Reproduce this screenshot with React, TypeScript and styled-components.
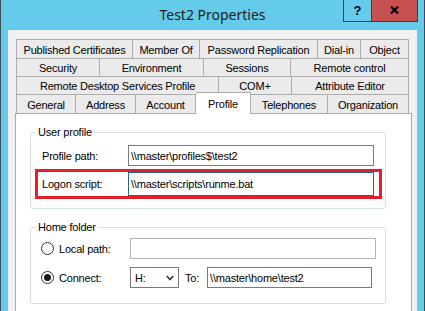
import React from 'react';
import styled, { createGlobalStyle } from 'styled-components';

const GlobalStyle = createGlobalStyle`
	html, body {
		margin: 0;
		padding: 0;
		width: 425px;
		height: 311px;
		overflow: hidden;
		background: #64CBEA;
	}
	* {
		box-sizing: border-box;
	}
`

const StyledWindow = styled.div`
	width: 425px;
	height: 311px;
	display: flex;
	flex-direction: column;
	background: #64CBEA;
	border-left: 1px solid #3d4a50;
	border-right: 1px solid #3d4a50;
	overflow: hidden;
	font-family: "Liberation Sans", Arial, sans-serif;
	font-size: 11px;
	letter-spacing: -0.2px;
	color: #000;
`

const StyledTitleBar = styled.div`
	height: 30px;
	flex: none;
	display: grid;
	grid-template-columns: 1fr auto 1fr;
	align-items: start;
`

const StyledTitle = styled.div`
	grid-column: 2;
	padding-top: 5px;
	font-family: "Noto Sans", sans-serif;
	font-size: 14px;
	letter-spacing: 0;
	line-height: 20px;
	color: #1e1e1e;
`

const StyledCaptionButtons = styled.div`
	grid-column: 3;
	justify-self: end;
	display: flex;
	margin-right: 6px;
	margin-top: -1px;
`

const StyledCaptionButton = styled.div<{ $w: number; $bg: string }>`
	width: ${p => p.$w}px;
	height: 23px;
	background: ${p => p.$bg};
	border: 1px solid #3c3c3c;
	border-top: none;
	display: flex;
	align-items: center;
	justify-content: center;
	font-weight: bold;
	font-size: 13px;
	letter-spacing: 0;
	& + & {
		border-left: none;
	}
`

const StyledClient = styled.div`
	flex: 1;
	margin: 0 7px;
	background: #F0F0F0;
	padding: 9px 5px 0 7px;
	display: flex;
	flex-direction: column;
`

const StyledTabRow = styled.div<{ $h: number }>`
	display: flex;
	align-items: flex-end;
	height: ${p => p.$h}px;
	margin: 0 3px 0 1px;
`

const StyledTab = styled.div<{ $w: number; $active?: boolean }>`
	width: ${p => p.$w}px;
	height: ${p => (p.$active ? 'calc(100% + 3px)' : '100%')};
	margin-bottom: ${p => (p.$active ? '-1px' : '0')};
	position: ${p => (p.$active ? 'relative' : 'static')};
	z-index: ${p => (p.$active ? 1 : 0)};
	background: ${p => (p.$active ? '#FFFFFF' : '#EBEBEB')};
	border: 1px solid #ACACAC;
	border-bottom: none;
	display: flex;
	align-items: center;
	justify-content: center;
	padding-top: 1px;
	white-space: nowrap;
	& + & {
		border-left: none;
	}
`

const StyledPanel = styled.div`
	flex: 1;
	background: #FFFFFF;
	border: 1px solid #ACACAC;
	border-bottom: none;
	padding: 18px 25px 0 14px;
	display: flex;
	flex-direction: column;
`

const StyledGroup = styled.div<{ $top: number; $pad: string }>`
	position: relative;
	margin-top: ${p => p.$top}px;
	width: 356px;
	border: 1px solid #D5DFE5;
	border-radius: 3px;
	padding: ${p => p.$pad};
	display: flex;
	flex-direction: column;
`

const StyledGroupTitle = styled.div`
	position: absolute;
	top: -8px;
	left: 5px;
	padding: 0 2px;
	background: #FFFFFF;
	line-height: 14px;
`

const StyledFieldRow = styled.div<{ $gap?: number }>`
	display: flex;
	align-items: center;
	padding-left: 11px;
	margin-top: ${p => p.$gap ?? 0}px;
`

const StyledHighlight = styled.div`
	display: flex;
	align-items: center;
	margin: 3px 3px 0 4px;
	border: 3px solid #E3202A;
	padding: 0 5px 0 4px;
`

const StyledLabel = styled.span<{ $w: number }>`
	width: ${p => p.$w}px;
	flex: none;
	white-space: nowrap;
`

const StyledTextBox = styled.input<{ $w: number; $h?: number; $tone?: 'dark' | 'light' | 'focus' }>`
	width: ${p => p.$w}px;
	height: ${p => p.$h ?? 21}px;
	flex: none;
	margin: 0;
	padding: 0 2px;
	border: 1px solid ${p => (p.$tone === 'light' ? '#B5B5B5' : p.$tone === 'focus' ? '#2C6397' : '#7A7A7A')};
	background: #FFFFFF;
	font-family: "Liberation Sans", Arial, sans-serif;
	font-size: 11px;
	letter-spacing: -0.2px;
	color: #000;
	outline: none;
`

const StyledRadio = styled.span<{ $checked?: boolean }>`
	width: 13px;
	height: 13px;
	flex: none;
	border-radius: 50%;
	border: 1px solid #333333;
	background: #FFFFFF;
	margin-right: 5px;
	display: flex;
	align-items: center;
	justify-content: center;
	&::after {
		content: '';
		display: ${p => (p.$checked ? 'block' : 'none')};
		width: 7px;
		height: 7px;
		border-radius: 50%;
		background: #1A1A1A;
	}
`

const StyledSelect = styled.div`
	width: 49px;
	height: 21px;
	flex: none;
	border: 1px solid #7A7A7A;
	display: flex;
	align-items: center;
	justify-content: space-between;
	padding: 0 4px 0 4px;
`

const StyledToLabel = styled.span`
	margin: 0 8px 0 6px;
`

const tabRows: { h: number; tabs: [string, number][] }[] = [
	{ h: 19, tabs: [['Published Certificates', 117], ['Member Of', 67], ['Password Replication', 118], ['Dial-in', 43], ['Object', 48]] },
	{ h: 18, tabs: [['Security', 84], ['Environment', 104], ['Sessions', 87], ['Remote control', 118]] },
	{ h: 18, tabs: [['Remote Desktop Services Profile', 203], ['COM+', 73], ['Attribute Editor', 117]] },
	{ h: 19, tabs: [['General', 60], ['Address', 60], ['Account', 60], ['Profile', 55], ['Telephones', 77], ['Organization', 81]] },
]

const App = () => {
	return <>
		<GlobalStyle />
		<StyledWindow>
			<StyledTitleBar>
				<StyledTitle>Test2 Properties</StyledTitle>
				<StyledCaptionButtons>
					<StyledCaptionButton $w={29} $bg="#64CBEA">?</StyledCaptionButton>
					<StyledCaptionButton $w={46} $bg="#C75050">
						<svg width="9" height="8" viewBox="0 0 9 8">
							<path d="M1 0.5 L8 7.5 M8 0.5 L1 7.5" stroke="#000" strokeWidth="2.2" />
						</svg>
					</StyledCaptionButton>
				</StyledCaptionButtons>
			</StyledTitleBar>
			<StyledClient>
				{tabRows.map((row, i) => (
					<StyledTabRow key={i} $h={row.h}>
						{row.tabs.map(([name, w]) => (
							<StyledTab key={name} $w={w} $active={name === 'Profile'}>{name}</StyledTab>
						))}
					</StyledTabRow>
				))}
				<StyledPanel>
					<StyledGroup $top={0} $pad="12px 0 9px 0">
						<StyledGroupTitle>User profile</StyledGroupTitle>
						<StyledFieldRow>
							<StyledLabel $w={86}>Profile path:</StyledLabel>
							<StyledTextBox $w={246} $tone="dark" readOnly value={'\\\\master\\profiles$\\test2'} />
						</StyledFieldRow>
						<StyledHighlight>
							<StyledLabel $w={86}>Logon script:</StyledLabel>
							<StyledTextBox $w={246} $h={24} $tone="focus" readOnly value={'\\\\master\\scripts\\runme.bat'} />
						</StyledHighlight>
					</StyledGroup>
					<StyledGroup $top={18} $pad="10px 0 15px 0">
						<StyledGroupTitle>Home folder</StyledGroupTitle>
						<StyledFieldRow style={{ paddingLeft: 10 }}>
							<StyledRadio />
							<StyledLabel $w={71}>Local path:</StyledLabel>
							<StyledTextBox $w={246} $tone="light" readOnly value="" />
						</StyledFieldRow>
						<StyledFieldRow $gap={8} style={{ paddingLeft: 10 }}>
							<StyledRadio $checked />
							<StyledLabel $w={71}>Connect:</StyledLabel>
							<StyledSelect>
								<span>H:</span>
								<svg width="8" height="6" viewBox="0 0 8 6">
									<path d="M0.8 1 L4 4.5 L7.2 1" stroke="#333" strokeWidth="1.6" fill="none" />
								</svg>
							</StyledSelect>
							<StyledToLabel>To:</StyledToLabel>
							<StyledTextBox $w={165} $tone="dark" readOnly value={'\\\\master\\home\\test2'} />
						</StyledFieldRow>
					</StyledGroup>
				</StyledPanel>
			</StyledClient>
		</StyledWindow>
	</>
}

export default App;
